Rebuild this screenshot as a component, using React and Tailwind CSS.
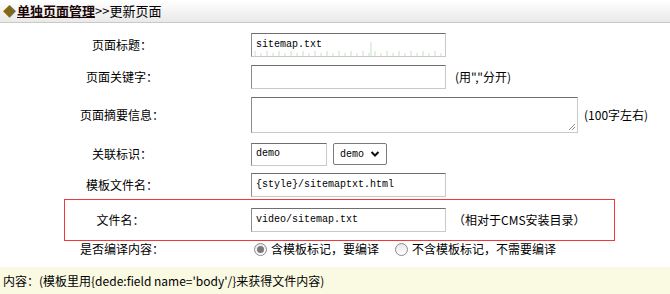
import React from "react";

const cjk = { fontFamily: '"Noto Sans CJK SC", "Liberation Sans", sans-serif' };
const mono = { fontFamily: '"Liberation Mono", "Noto Sans CJK SC", monospace' };

function Field({ w, h = "h-[24px]", children, ticks }) {
  return (
    <div
      className={`relative ${w} ${h} bg-white border border-t-[#6e6e6e] border-l-[#8c8c8c] border-r-[#c9c9c9] border-b-[#c9c9c9] flex items-center px-[4px] text-[10px] text-black leading-none`}
      style={mono}
    >
      {children}
      {ticks && (
        <svg className="absolute left-0 bottom-0" width="194" height="14" viewBox="0 0 194 14">
          {Array.from({ length: 32 }).map((_, i) => (
            <line
              key={i}
              x1={3 + i * 6}
              x2={3 + i * 6}
              y1={i % 2 === 0 ? 9 : 11}
              y2={14}
              stroke="#c4e3c4"
              strokeWidth="1"
            />
          ))}
          <line x1="119" x2="119" y1="0" y2="14" stroke="#c4e3c4" strokeWidth="1" />
        </svg>
      )}
    </div>
  );
}

function Label({ children }) {
  return <div className="w-[244px] text-center text-[12px] text-black shrink-0">{children}</div>;
}

function Radio({ checked }) {
  return (
    <div className="w-[13px] h-[13px] rounded-full border border-[#8a8a8a] bg-gradient-to-b from-[#e8e8e8] to-white flex items-center justify-center shrink-0">
      {checked && <div className="w-[7px] h-[7px] rounded-full bg-[#7a7a7a]" />}
    </div>
  );
}

export default function App() {
  return (
    <div className="w-[670px] h-[294px] bg-white overflow-hidden flex flex-col" style={cjk}>
      <div className="h-[23px] bg-gradient-to-b from-white to-[#e9e9e9] border-b border-[#c9c9c9] flex items-center pl-[3px] text-[13px] text-black shrink-0">
        <span className="text-[#7d6a1c] text-[13px] mr-[1px]">◆</span>
        <span className="font-bold underline text-[#1a0505]">单独页面管理</span>
        <span>&gt;&gt;更新页面</span>
      </div>
      <div className="h-[6px] shrink-0" />
      <div className="h-[32px] flex items-center shrink-0">
        <Label>页面标题：</Label>
        <div className="pl-[7px]">
          <Field w="w-[195px]" ticks>sitemap.txt</Field>
        </div>
      </div>
      <div className="h-[32px] flex items-center shrink-0">
        <Label>页面关键字：</Label>
        <div className="pl-[7px] flex items-center">
          <Field w="w-[195px]" />
          <span className="ml-[9px] text-[12px] text-black">(用","分开)</span>
        </div>
      </div>
      <div className="h-[44px] flex items-center shrink-0">
        <Label>页面摘要信息：</Label>
        <div className="pl-[7px] flex items-center">
          <div className="relative w-[327px] h-[36px] bg-white border border-t-[#6e6e6e] border-l-[#8c8c8c] border-r-[#c9c9c9] border-b-[#c9c9c9]">
            <svg className="absolute right-[1px] bottom-[1px]" width="8" height="8" viewBox="0 0 8 8">
              <line x1="1" y1="7" x2="7" y2="1" stroke="#8a8a8a" />
              <line x1="4" y1="7" x2="7" y2="4" stroke="#8a8a8a" />
            </svg>
          </div>
          <span className="ml-[6px] text-[12px] text-black">(100字左右)</span>
        </div>
      </div>
      <div className="h-[34px] flex items-center shrink-0">
        <Label>关联标识：</Label>
        <div className="pl-[7px] flex items-center">
          <Field w="w-[76px]" h="h-[23px]">demo</Field>
          <div
            className="ml-[6px] w-[54px] h-[22px] border border-[#7a7a7a] rounded-[2px] bg-white flex items-center pl-[6px] gap-[6px] text-[10px] text-black"
            style={mono}
          >
            <span>demo</span>
            <svg width="10" height="8" viewBox="0 0 10 8">
              <path d="M1.5 2 L5 5.5 L8.5 2" fill="none" stroke="#111" strokeWidth="2" />
            </svg>
          </div>
        </div>
      </div>
      <div className="h-[28px] flex items-center shrink-0">
        <Label>模板文件名：</Label>
        <div className="pl-[7px]">
          <Field w="w-[195px]">{"{style}/sitemaptxt.html"}</Field>
        </div>
      </div>
      <div className="ml-[64px] w-[551px] h-[42px] border border-[#f03a3a] flex items-center shrink-0">
        <div className="w-[111px] text-center text-[12px] text-black shrink-0">文件名：</div>
        <div className="pl-[75px] flex items-center">
          <Field w="w-[195px]">video/sitemap.txt</Field>
          <span className="ml-[7px] text-[12px] text-black">（相对于CMS安装目录）</span>
        </div>
      </div>
      <div className="h-[16px] flex items-center shrink-0">
        <Label>是否编译内容：</Label>
        <div className="pl-[10px] flex items-center text-[12px] text-black">
          <Radio checked />
          <span className="ml-[4px]">含模板标记，要编译</span>
          <div className="ml-[16px]" />
          <Radio />
          <span className="ml-[4px]">不含模板标记，不需要编译</span>
        </div>
      </div>
      <div className="h-[10px] shrink-0" />
      <div className="flex-1 bg-[#fafae3] flex items-center pl-[3px] text-[12px] text-black">
        内容：(模板里用{"{dede:field name='body'/}"}来获得文件内容)
      </div>
    </div>
  );
}
